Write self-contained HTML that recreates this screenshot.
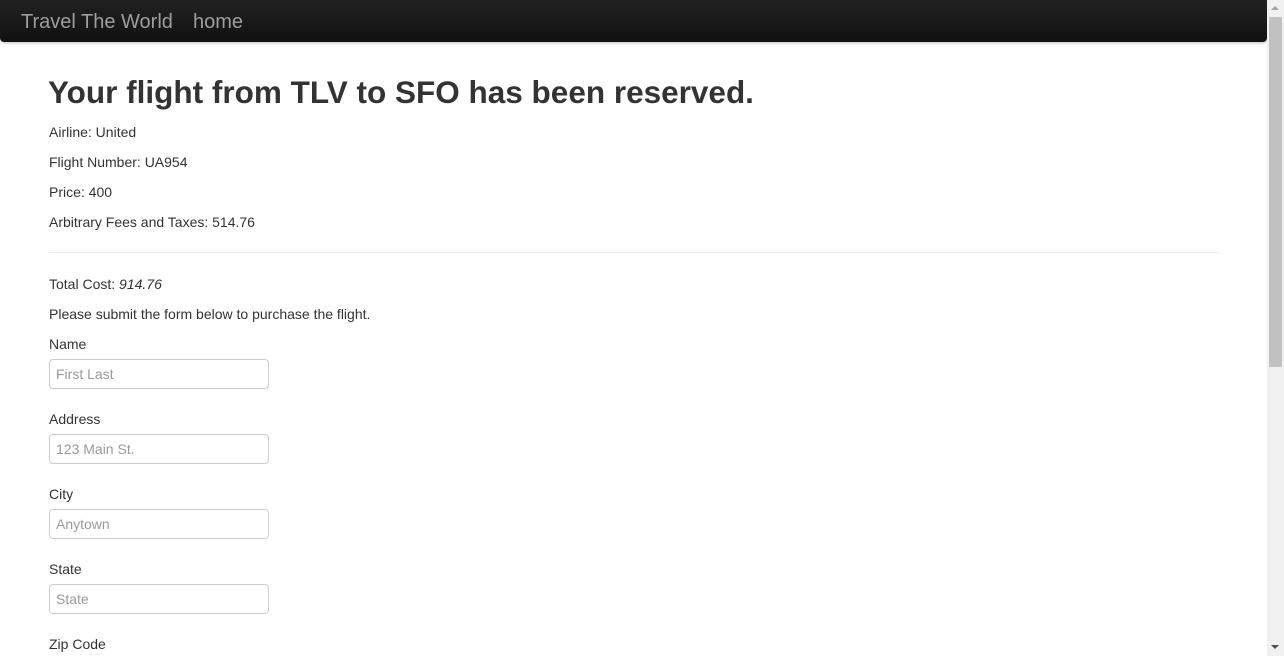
<!DOCTYPE html>
<html><head><style>
*{margin:0;padding:0;box-sizing:border-box}
body{width:1284px;height:656px;overflow:hidden;background:#fff;font-family:"Liberation Sans",sans-serif;color:#333;font-size:14px;position:relative}
.nav{position:absolute;left:0;top:0;width:1267px;height:42px;background:linear-gradient(#222,#111);border-radius:0 0 4px 4px;box-shadow:0 1px 3px rgba(0,0,0,.25)}
.nav span{position:absolute;top:11px;font-size:20px;color:#9d9d9d;line-height:22px}
.t{position:absolute;left:49px;line-height:20px}
h1{position:absolute;left:48px;top:72px;font-size:31.5px;font-weight:bold;line-height:40px;color:#333}
hr{position:absolute;left:49px;top:252px;width:1170px;border:0;border-top:1px solid #eee}
.in{position:absolute;left:49px;width:220px;height:30px;border:1px solid #ccc;border-radius:4px;padding:6px;color:#999;font-size:14px;line-height:16px}
.sb{position:absolute;left:1267px;top:0;width:17px;height:656px;background:#f1f1f1}
.th{position:absolute;left:2px;top:17px;width:13px;height:350px;background:#c1c1c1}
</style></head><body>
<div class="nav"><span style="left:21px">Travel The World</span><span style="left:193px">home</span></div>
<h1>Your flight from TLV to SFO has been reserved.</h1>
<div class="t" style="top:122px">Airline: United</div>
<div class="t" style="top:152px">Flight Number: UA954</div>
<div class="t" style="top:182px">Price: 400</div>
<div class="t" style="top:212px">Arbitrary Fees and Taxes: 514.76</div>
<hr>
<div class="t" style="top:274px">Total Cost: <i>914.76</i></div>
<div class="t" style="top:304px">Please submit the form below to purchase the flight.</div>
<div class="t" style="top:334px">Name</div>
<div class="in" style="top:359px">First Last</div>
<div class="t" style="top:409px">Address</div>
<div class="in" style="top:434px">123 Main St.</div>
<div class="t" style="top:484px">City</div>
<div class="in" style="top:509px">Anytown</div>
<div class="t" style="top:559px">State</div>
<div class="in" style="top:584px">State</div>
<div class="t" style="top:634px">Zip Code</div>
<div class="sb"><div style="position:absolute;left:4px;top:6px;width:0;height:0;border-left:4px solid transparent;border-right:4px solid transparent;border-bottom:4px solid #a3a3a3"></div><div class="th"></div><div style="position:absolute;left:4px;top:645px;width:0;height:0;border-left:4px solid transparent;border-right:4px solid transparent;border-top:4px solid #505050"></div></div>
</body></html>
